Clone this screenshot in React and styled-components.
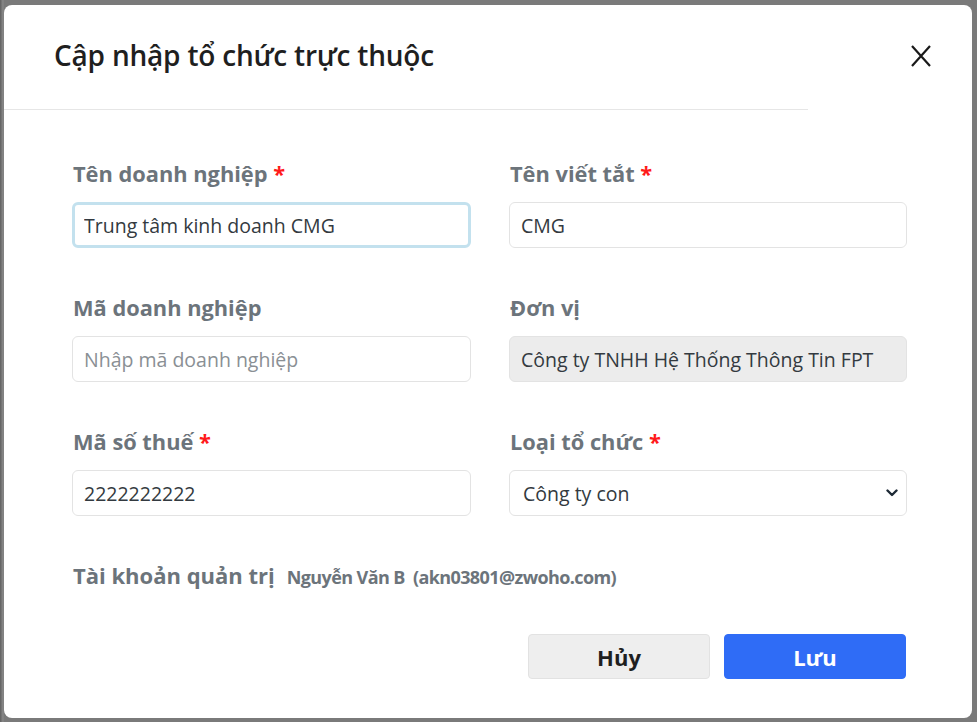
import React from 'react';
import styled, { createGlobalStyle } from 'styled-components';

const GlobalStyle = createGlobalStyle`
    html, body {
        margin: 0;
        padding: 0;
        background: #7a7a7a;
        font-family: "Open Sans", "Noto Sans", sans-serif;
    }
`;

const Backdrop = styled.div`
    width: 977px;
    height: 722px;
    padding: 5px 5px 4px 4px;
    box-sizing: border-box;
    background: linear-gradient(to right, #5f5f5f 0, #8a8a8a 3px, #7a7a7a 4px);
`;

const Modal = styled.div`
    width: 100%;
    height: 100%;
    background: #ffffff;
    border-radius: 8px;
    display: flex;
    flex-direction: column;
    overflow: hidden;
`;

const Header = styled.div`
    display: flex;
    align-items: flex-start;
`;

const HeaderMain = styled.div`
    flex: 0 0 804px;
    height: 105px;
    box-sizing: border-box;
    padding: 31px 0 0 50px;
    border-bottom: 1px solid #e6e6e6;
`;

const Title = styled.h2`
    margin: 0;
    font-size: 28px;
    line-height: 38px;
    font-weight: 600;
    color: #1f1f1f;
    letter-spacing: -0.2px;
`;

const CloseButton = styled.button`
    margin: 38px 0 0 100px;
    width: 26px;
    height: 26px;
    padding: 0;
    border: none;
    background: none;
    cursor: pointer;
`;

const Body = styled.div`
    padding: 50px 65px 0 68px;
    display: flex;
    flex-direction: column;
`;

const FieldGrid = styled.div`
    display: grid;
    grid-template-columns: 399px 398px;
    column-gap: 38px;
    row-gap: 46px;
`;

const Field = styled.div`
    display: flex;
    flex-direction: column;
    gap: 14px;
`;

const Label = styled.label`
    font-size: 21.8px;
    line-height: 28px;
    font-weight: 700;
    color: #6c747b;
    padding-left: 1px;

    .required {
        color: #ff1a1a;
    }
`;

const Input = styled.input`
    height: 46px;
    box-sizing: border-box;
    border-radius: 6px;
    border: ${(p) => (p.$focused ? '3px solid #c3e1ee' : '1px solid #e3e3e3')};
    background: ${(p) => (p.disabled ? '#ececec' : '#ffffff')};
    padding: 0 ${(p) => (p.$focused ? '9px' : '11px')};
    font-family: inherit;
    font-size: 19.5px;
    color: #333a40;
    outline: none;
    -webkit-text-fill-color: #333a40;
    caret-color: #111;

    &::placeholder {
        color: #8a8f94;
        -webkit-text-fill-color: #8a8f94;
    }
`;

const Select = styled.select`
    height: 46px;
    box-sizing: border-box;
    border-radius: 6px;
    border: 1px solid #e3e3e3;
    background: #ffffff url("data:image/svg+xml,%3Csvg xmlns='http://www.w3.org/2000/svg' width='12' height='8' viewBox='0 0 12 8'%3E%3Cpath d='M1.5 1.5 6 6l4.5-4.5' fill='none' stroke='%231e2a36' stroke-width='2.4' stroke-linecap='round' stroke-linejoin='round'/%3E%3C/svg%3E") no-repeat right 8px center;
    appearance: none;
    padding: 0 13px;
    font-family: inherit;
    font-size: 19.5px;
    color: #333a40;
    outline: none;
`;

const AdminRow = styled.div`
    margin-top: 45px;
    display: flex;
    align-items: baseline;
    gap: 12px;
    padding-left: 1px;
    line-height: 28px;
`;

const AdminLabel = styled.span`
    font-size: 22px;
    font-weight: 700;
    color: #6c747b;
`;

const AdminValue = styled.span`
    font-size: 18px;
    font-weight: 700;
    color: #6c747b;
    letter-spacing: -0.6px;
    white-space: pre;
`;

const Actions = styled.div`
    margin-top: 43px;
    display: flex;
    justify-content: flex-end;
    gap: 14px;
    padding-right: 1px;
`;

const Button = styled.button`
    width: 182px;
    height: 45px;
    border-radius: 4px;
    font-family: inherit;
    font-size: 22px;
    font-weight: 700;
    cursor: pointer;
    background: ${(p) => (p.$primary ? '#2f6cf6' : '#eeeeee')};
    color: ${(p) => (p.$primary ? '#ffffff' : '#1f1f1f')};
    border: 1px solid ${(p) => (p.$primary ? '#2f6cf6' : '#e2e2e2')};
`;

function CloseIcon() {
    return (
        <svg width="26" height="26" viewBox="0 0 26 26">
            <path d="M4 3 L22 23 M22 3 L4 23" stroke="#1a1a1a" strokeWidth="2.2" fill="none" />
        </svg>
    );
}

function App() {
    return (
        <>
            <GlobalStyle />
            <Backdrop>
                <Modal>
                    <Header>
                        <HeaderMain>
                            <Title>Cập nhập tổ chức trực thuộc</Title>
                        </HeaderMain>
                        <CloseButton aria-label="close">
                            <CloseIcon />
                        </CloseButton>
                    </Header>
                    <Body>
                        <FieldGrid>
                            <Field>
                                <Label>Tên doanh nghiệp <span className="required">*</span></Label>
                                <Input $focused defaultValue="Trung tâm kinh doanh CMG" />
                            </Field>
                            <Field>
                                <Label>Tên viết tắt <span className="required">*</span></Label>
                                <Input defaultValue="CMG" />
                            </Field>
                            <Field>
                                <Label>Mã doanh nghiệp</Label>
                                <Input placeholder="Nhập mã doanh nghiệp" />
                            </Field>
                            <Field>
                                <Label>Đơn vị</Label>
                                <Input disabled defaultValue="Công ty TNHH Hệ Thống Thông Tin FPT" />
                            </Field>
                            <Field>
                                <Label>Mã số thuế <span className="required">*</span></Label>
                                <Input defaultValue="2222222222" />
                            </Field>
                            <Field>
                                <Label>Loại tổ chức <span className="required">*</span></Label>
                                <Select defaultValue="con">
                                    <option value="con">Công ty con</option>
                                    <option value="me">Công ty mẹ</option>
                                </Select>
                            </Field>
                        </FieldGrid>
                        <AdminRow>
                            <AdminLabel>Tài khoản quản trị</AdminLabel>
                            <AdminValue>Nguyễn Văn B  (akn03801@zwoho.com)</AdminValue>
                        </AdminRow>
                        <Actions>
                            <Button>Hủy</Button>
                            <Button $primary>Lưu</Button>
                        </Actions>
                    </Body>
                </Modal>
            </Backdrop>
        </>
    );
}

export default App;
